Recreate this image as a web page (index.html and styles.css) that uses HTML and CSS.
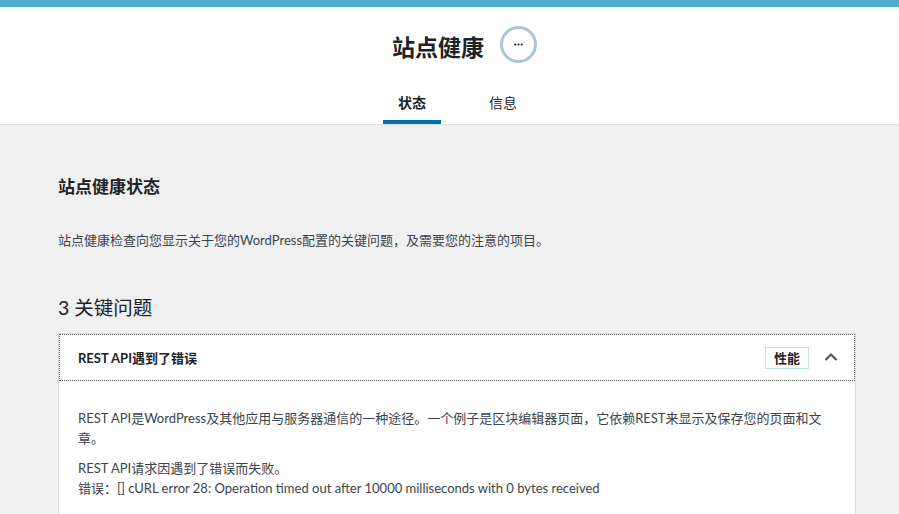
FILE: index.html
```html
<!DOCTYPE html>
<html lang="zh-CN">
<head>
<meta charset="utf-8">
<title>站点健康</title>
<link rel="stylesheet" href="styles.css">
</head>
<body>
<div class="topbar"></div>
<header class="health-header">
  <div class="title-row">
    <h1 class="page-title">站点健康</h1>
    <div class="progress-circle"><svg class="dots" width="9" height="3" viewBox="0 0 9 3"><circle cx="1.3" cy="1.5" r="1.1" fill="#1d2327"/><circle cx="4.5" cy="1.5" r="1.1" fill="#1d2327"/><circle cx="7.7" cy="1.5" r="1.1" fill="#1d2327"/></svg></div>
  </div>
  <nav class="tabs">
    <a class="tab active" href="#">状态</a>
    <a class="tab" href="#">信息</a>
  </nav>
</header>
<main class="content">
  <h2 class="section-title">站点健康状态</h2>
  <p class="intro">站点健康检查向您显示关于您的WordPress配置的关键问题，及需要您的注意的项目。</p>
  <h3 class="issues-title">3 关键问题</h3>
  <div class="accordion">
    <div class="acc-head">
      <span class="acc-title">REST API遇到了错误</span>
      <span class="acc-meta">
        <span class="badge">性能</span>
        <svg class="chevron" width="14" height="10" viewBox="0 0 14 10"><path d="M1.5 8 L7 2.5 L12.5 8" fill="none" stroke="#50575e" stroke-width="2.2"/></svg>
      </span>
    </div>
    <div class="acc-body">
      <p>REST API是WordPress及其他应用与服务器通信的一种途径。一个例子是区块编辑器页面，它依赖REST来显示及保存您的页面和文章。</p>
      <p>REST API请求因遇到了错误而失败。<br>错误：[] cURL error 28: Operation timed out after 10000 milliseconds with 0 bytes received</p>
    </div>
  </div>
</main>
</body>
</html>
```
FILE: styles.css
```css
* { box-sizing: border-box; }
html, body { margin: 0; padding: 0; }
body {
  background: #f0f0f1;
  font-family: "Lato", "Noto Sans CJK SC", sans-serif;
  color: #3c434a;
  font-size: 13px;
  overflow: hidden;
}
.topbar { height: 7px; background: #51abce; }
.health-header {
  background: #fff;
  border-bottom: 1px solid #dcdcde;
  height: 118px;
  display: flex;
  flex-direction: column;
  align-items: center;
}
.title-row {
  display: flex;
  align-items: center;
  gap: 16px;
  height: 78px;
  padding-left: 30px;
  padding-top: 2px;
}
.page-title {
  margin: 0;
  font-size: 23px;
  font-weight: 700;
  color: #1d2327;
  line-height: 1;
}
.progress-circle {
  width: 37px; height: 37px;
  border-radius: 50%;
  border: 3px solid #a9c6d4;
  display: flex; align-items: center; justify-content: center;
  margin-top: -6px;
}
.dots { display: block; }
.tabs { display: flex; gap: 33px; height: 39px; padding-left: 16px; }
.tab {
  display: flex; align-items: center;
  padding: 0 15px 2px;
  font-size: 14px;
  color: #1d2327;
  text-decoration: none;
  border-bottom: 4px solid transparent;
}
.tab.active { border-bottom-color: #0073aa; font-weight: 600; }
.content { padding: 0 0 0 58px; width: 856px; }
.section-title {
  margin: 50px 0 0;
  font-size: 17px;
  font-weight: 700;
  color: #1d2327;
  line-height: 24px;
}
.intro { margin: 31px 0 0; line-height: 20px; color: #3c434a; }
.issues-title {
  margin: 45px 0 0;
  font-size: 19.5px;
  font-weight: 400;
  color: #1d2327;
  line-height: 26px;
}
.accordion {
  margin-top: 12px;
  background: #fff;
  border: 1px solid #dcdcde;
  border-bottom: none;
}
.acc-head {
  height: 47px;
  outline: 1px dotted #50575e;
  outline-offset: -1px;
  display: flex; align-items: center; justify-content: space-between;
  padding: 0 17px 0 19px;
}
.acc-title { font-weight: 700; color: #1d2327; font-size: 13px; }
.acc-meta { display: flex; align-items: center; gap: 15px; }
.badge {
  border: 1px solid #c0e2f0;
  padding: 0 8px;
  height: 22px;
  display: flex; align-items: center;
  font-weight: 600;
  color: #1d2327;
}
.chevron { display: block; margin-top: -2px; }
.acc-body { padding: 28px 20px 20px 19px; }
.acc-body p { margin: 0 0 11px; line-height: 19.5px; }
```
